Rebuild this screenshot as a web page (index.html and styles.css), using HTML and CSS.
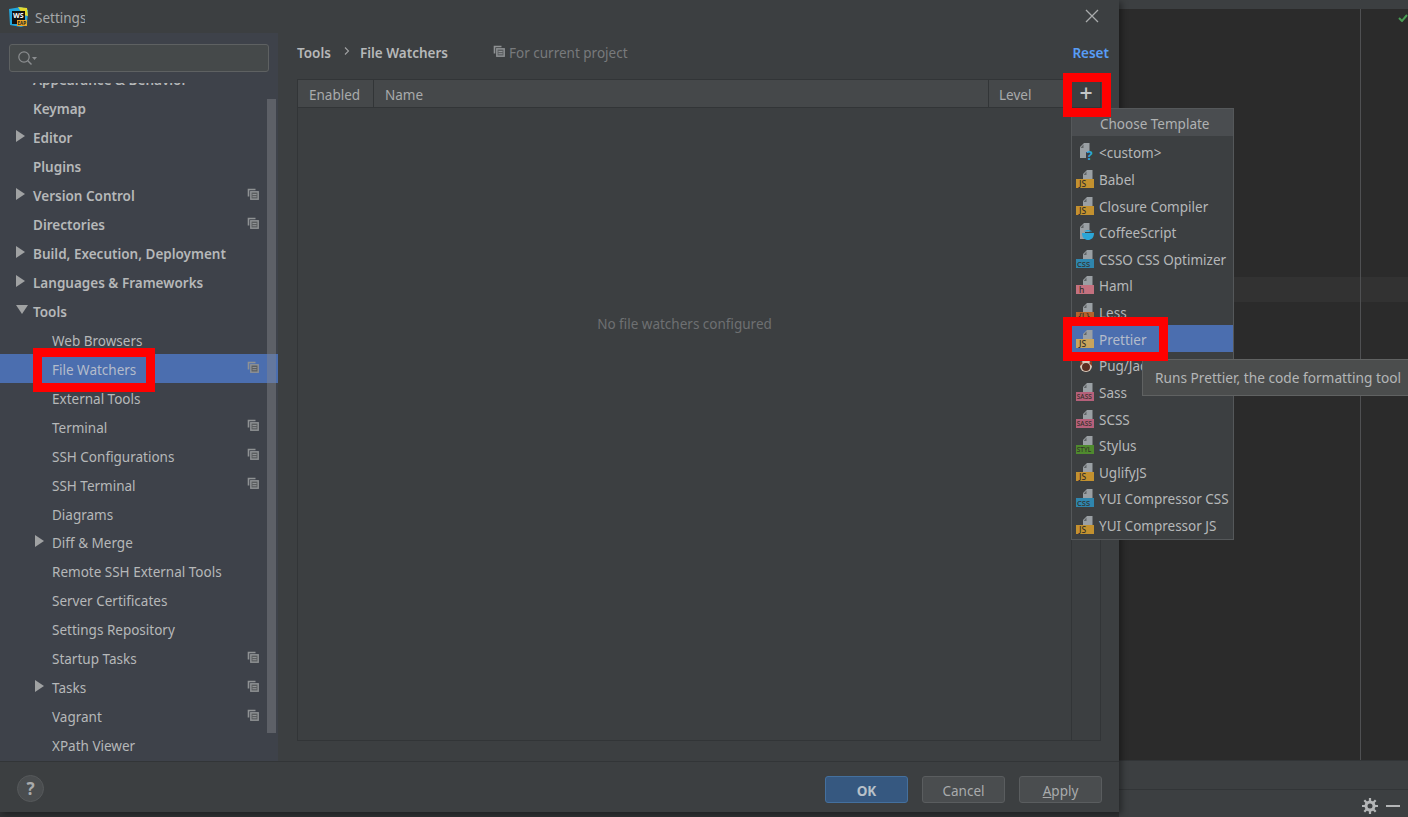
FILE: index.html
```html
<!DOCTYPE html>
<html lang="en">
<head>
  <meta charset="UTF-8">
  <title>Settings</title>
  <link rel="stylesheet" href="styles.css">
</head>
<body>
  <svg class="defs" width="0" height="0">
    <symbol id="scope" viewBox="0 0 12 12">
      <path d="M1.500 8.500v-7h7" fill="none" stroke="#8f9294" stroke-width="1.600"/>
      <rect x="3.800" y="3.800" width="7.400" height="7.400" fill="#5b5e60" stroke="#8f9294" stroke-width="1.400"/>
      <path d="M5.500 6.500h4M5.500 8.700h4" stroke="#8f9294"/>
    </symbol>
    <symbol id="page" viewBox="0 0 18 18">
      <path d="M11 0h5.500v9H7V4z" fill="#9aa0a4"/>
      <path d="M10.500 1.500v3.500h-3z" fill="#3c3f41" opacity="0.600"/>
    </symbol>
  </svg>

  <div class="page">
    <div class="dialog">
      <div class="titlebar">
        <svg class="logo" width="20" height="20" viewBox="0 0 20 20">
          <path d="M1 2l12-2 7 3-1 15-6 2-11-2z" fill="#22a6dc"/>
          <path d="M10 0l9 1 1 8-5-1z" fill="#e3d92f"/>
          <rect x="4" y="4" width="13" height="13" fill="#111"/>
          <text x="5" y="11" class="logo-ws">WS</text>
          <rect x="9" y="13" width="10" height="6" fill="#e8a72a"/>
          <text x="9.600" y="18" class="logo-eap">EAP</text>
        </svg>
        <span class="title">Settings</span>
        <svg class="close" width="14" height="14" viewBox="0 0 14 14"><path d="M1 1l12 12M13 1L1 13" stroke="#a9abac" stroke-width="1.300"/></svg>
      </div>

      <div class="main">
        <aside class="sidebar">
          <div class="search-wrap">
            <div class="search">
              <svg width="22" height="16" viewBox="0 0 22 16">
                <circle cx="7" cy="7" r="5.200" fill="none" stroke="#8b8e90" stroke-width="1.200"/>
                <path d="M10.800 10.800l3.700 3.700" stroke="#8b8e90" stroke-width="1.400"/>
                <path d="M15 7h5l-2.500 3z" fill="#8b8e90"/>
              </svg>
            </div>
          </div>
          <div class="tree">
            <ul class="tree-list">
              <li class="row top">Appearance &amp; Behavior</li>
              <li class="row top">Keymap</li>
              <li class="row top arrow">Editor</li>
              <li class="row top">Plugins</li>
              <li class="row top arrow">Version Control<svg class="scope"><use href="#scope"/></svg></li>
              <li class="row top">Directories<svg class="scope"><use href="#scope"/></svg></li>
              <li class="row top arrow">Build, Execution, Deployment</li>
              <li class="row top arrow">Languages &amp; Frameworks</li>
              <li class="row top arrow open">Tools</li>
              <li class="row sub">Web Browsers</li>
              <li class="row sub selected">File Watchers<svg class="scope"><use href="#scope"/></svg></li>
              <li class="row sub">External Tools</li>
              <li class="row sub">Terminal<svg class="scope"><use href="#scope"/></svg></li>
              <li class="row sub">SSH Configurations<svg class="scope"><use href="#scope"/></svg></li>
              <li class="row sub">SSH Terminal<svg class="scope"><use href="#scope"/></svg></li>
              <li class="row sub">Diagrams</li>
              <li class="row sub arrow">Diff &amp; Merge</li>
              <li class="row sub">Remote SSH External Tools</li>
              <li class="row sub">Server Certificates</li>
              <li class="row sub">Settings Repository</li>
              <li class="row sub">Startup Tasks<svg class="scope"><use href="#scope"/></svg></li>
              <li class="row sub arrow">Tasks<svg class="scope"><use href="#scope"/></svg></li>
              <li class="row sub">Vagrant<svg class="scope"><use href="#scope"/></svg></li>
              <li class="row sub">XPath Viewer</li>
            </ul>
          </div>
          <div class="scrollbar"></div>
        </aside>

        <section class="content">
          <div class="crumbs">
            <b>Tools</b>
            <svg class="chevron" width="6" height="8" viewBox="0 0 6 8"><path d="M1 .5L4.500 4 1 7.500" fill="none" stroke="#a0a2a3" stroke-width="1.100"/></svg>
            <b>File Watchers</b>
            <svg class="scope crumb-scope"><use href="#scope"/></svg>
            <span class="project">For current project</span>
            <a class="reset">Reset</a>
          </div>
          <div class="table">
            <div class="thead">
              <div class="th">Enabled</div>
              <div class="th">Name</div>
              <div class="th">Level</div>
              <div class="th-add">+</div>
            </div>
            <div class="tbody">
              <div class="empty">No file watchers configured</div>
              <div class="toolbar-col"></div>
            </div>
          </div>
        </section>
      </div>

      <div class="footer">
        <div class="help">?</div>
        <div class="buttons">
          <button class="btn primary">OK</button>
          <button class="btn">Cancel</button>
          <button class="btn"><u>A</u>pply</button>
        </div>
      </div>
    </div>

    <div class="backdrop">
      <div class="top-strip"></div>
      <div class="editor">
        <div class="caret-row"></div>
        <div class="guide"></div>
        <svg class="check" width="10" height="8" viewBox="0 0 10 8"><path d="M1 4l3 3 5-6" fill="none" stroke="#499c54" stroke-width="2"/></svg>
      </div>
      <div class="status-strip"></div>
      <div class="tool-strip">
        <svg width="16" height="16" viewBox="0 0 16 16">
          <circle cx="8" cy="8" r="4" fill="none" stroke="#b4b6b7" stroke-width="3"/>
          <path d="M8 0v3M8 13v3M0 8h3M13 8h3M2.300 2.300l2.200 2.200M11.500 11.500l2.200 2.200M13.700 2.300l-2.200 2.200M4.500 11.500l-2.200 2.200" stroke="#b4b6b7" stroke-width="2.200"/>
        </svg>
        <div class="minus"></div>
      </div>
    </div>

    <div class="popup">
      <div class="popup-head">Choose Template</div>
      <ul class="popup-list">
        <li class="tpl"><svg class="tpl-icon" viewBox="0 0 18 18"><use href="#page" width="18" height="18" x="-3" y="0"/><path d="M4 9h6v6H4z" fill="#9aa0a4"/><text x="10.500" y="17" class="q">?</text></svg>&lt;custom&gt;</li>
        <li class="tpl"><svg class="tpl-icon" viewBox="0 0 18 18"><use href="#page" width="18" height="18"/><rect y="9" width="18" height="9" fill="#c3912f"/><text x="3" y="16.500" class="badge">JS</text></svg>Babel</li>
        <li class="tpl"><svg class="tpl-icon" viewBox="0 0 18 18"><use href="#page" width="18" height="18"/><rect y="9" width="18" height="9" fill="#c3912f"/><text x="3" y="16.500" class="badge">JS</text></svg>Closure Compiler</li>
        <li class="tpl"><svg class="tpl-icon" viewBox="0 0 18 18"><use href="#page" width="18" height="18" x="-3" y="0"/><path d="M4 9h5v7H4z" fill="#9aa0a4"/><path d="M6 10h12c0 5-3 7-6 7S6 15 6 10z" fill="#2ba6d8"/><path d="M8 8.500c2-2 6-2 8 0z" fill="#2ba6d8"/></svg>CoffeeScript</li>
        <li class="tpl"><svg class="tpl-icon" viewBox="0 0 18 18"><use href="#page" width="18" height="18"/><rect y="9" width="18" height="9" fill="#2f86ae"/><text x="1" y="16.500" class="badge mid">CSS</text></svg>CSSO CSS Optimizer</li>
        <li class="tpl"><svg class="tpl-icon" viewBox="0 0 18 18"><use href="#page" width="18" height="18"/><rect y="9" width="18" height="9" fill="#c4717f"/><text x="3" y="16.500" class="badge">h</text></svg>Haml</li>
        <li class="tpl"><svg class="tpl-icon" viewBox="0 0 18 18"><use href="#page" width="18" height="18"/><rect y="9" width="18" height="9" fill="#b5622b"/><text x="2.500" y="16.500" class="badge">{L}</text></svg>Less</li>
        <li class="tpl active"><svg class="tpl-icon" viewBox="0 0 18 18"><use href="#page" width="18" height="18"/><rect y="9" width="18" height="9" fill="#c9a45c"/><text x="3" y="16.500" class="badge">JS</text></svg>Prettier</li>
        <li class="tpl"><svg class="tpl-icon" viewBox="0 0 18 18"><circle cx="10" cy="10" r="6" fill="#d8c8b8"/><circle cx="10" cy="11" r="4" fill="#5a2f22"/><path d="M4 5l3 2-3 3zM16 5l-3 2 3 3z" fill="#8a3b24"/></svg>Pug/Jade</li>
        <li class="tpl"><svg class="tpl-icon" viewBox="0 0 18 18"><use href="#page" width="18" height="18"/><rect y="9" width="18" height="9" fill="#b5607a"/><text x="0.800" y="16.300" class="badge tiny">SASS</text></svg>Sass</li>
        <li class="tpl"><svg class="tpl-icon" viewBox="0 0 18 18"><use href="#page" width="18" height="18"/><rect y="9" width="18" height="9" fill="#b5607a"/><text x="0.800" y="16.300" class="badge tiny">SASS</text></svg>SCSS</li>
        <li class="tpl"><svg class="tpl-icon" viewBox="0 0 18 18"><use href="#page" width="18" height="18"/><rect y="9" width="18" height="9" fill="#4f8a2e"/><text x="0.800" y="16.300" class="badge tiny">STYL</text></svg>Stylus</li>
        <li class="tpl"><svg class="tpl-icon" viewBox="0 0 18 18"><use href="#page" width="18" height="18"/><rect y="9" width="18" height="9" fill="#c3912f"/><text x="3" y="16.500" class="badge">JS</text></svg>UglifyJS</li>
        <li class="tpl"><svg class="tpl-icon" viewBox="0 0 18 18"><use href="#page" width="18" height="18"/><rect y="9" width="18" height="9" fill="#2f86ae"/><text x="1" y="16.500" class="badge mid">CSS</text></svg>YUI Compressor CSS</li>
        <li class="tpl"><svg class="tpl-icon" viewBox="0 0 18 18"><use href="#page" width="18" height="18"/><rect y="9" width="18" height="9" fill="#c3912f"/><text x="3" y="16.500" class="badge">JS</text></svg>YUI Compressor JS</li>
      </ul>
    </div>

    <div class="tooltip">Runs Prettier, the code formatting tool</div>

    <!-- red boxes drawn on the screenshot -->
    <div class="mark mark-watchers"></div>
    <div class="mark mark-add"></div>
    <div class="mark mark-prettier"></div>
  </div>
</body>
</html>
```

FILE: styles.css
```css
/* Base */
* {
  box-sizing: border-box;
}

html,
body {
  margin: 0;
  padding: 0;
  height: 100%;
  overflow: hidden;
}

body {
  font-family: "Noto Sans", "Open Sans", sans-serif;
  font-size: 13.500px;
  color: #b6b8b9;
  background: #2f3133;
}

ul {
  list-style: none;
  margin: 0;
  padding: 0;
}

.defs {
  position: absolute;
}

.page {
  position: relative;
  display: flex;
  width: 1408px;
  height: 817px;
  overflow: hidden;
}

/* Dialog */
.dialog {
  position: relative;
  z-index: 1;
  display: flex;
  flex-direction: column;
  flex: 0 0 1119px;
  height: 812px;
  background: #3c3f41;
  box-shadow: 3px 2px 6px rgba(0, 0, 0, 0.35);
}

.titlebar {
  display: flex;
  align-items: center;
  flex: 0 0 33px;
  padding: 0 20px 0 8px;
}

.logo-ws {
  font-size: 7px;
  font-weight: 700;
  fill: #ffffff;
}

.logo-eap {
  font-size: 4.500px;
  font-weight: 700;
  fill: #222222;
}

.title {
  margin-left: 7px;
  margin-top: 2px;
  width: 50px;
  overflow: hidden;
  color: #a6a8a9;
}

.close {
  margin-left: auto;
  margin-top: -2px;
}

.main {
  display: flex;
  flex: 1;
  min-height: 0;
}

/* Sidebar */
.sidebar {
  position: relative;
  display: flex;
  flex-direction: column;
  flex: 0 0 278px;
  background: #3e424a;
}

.search-wrap {
  flex: 0 0 50px;
  padding: 11px 9px 0;
}

.search {
  display: flex;
  align-items: center;
  height: 28px;
  padding-left: 7px;
  background: #45494a;
  border: 1px solid #5e6162;
  border-radius: 3px;
}

.tree {
  flex: 1;
  overflow: hidden;
}

.tree-list {
  margin-top: -18px;
}

.row {
  position: relative;
  display: flex;
  align-items: center;
  height: 28.950px;
  padding-top: 2px;
  padding-right: 19px;
  white-space: nowrap;
}

.row.top {
  padding-left: 33px;
  font-weight: 600;
}

.row.sub {
  padding-left: 52px;
}

.row.selected {
  background: #4b6eaf;
  color: #b4bccb;
}

.row.arrow::before {
  content: "";
  position: absolute;
  top: 7px;
  left: 16px;
  border-style: solid;
  border-width: 6px 0 6px 9px;
  border-color: transparent transparent transparent #a0a2a3;
}

.row.sub.arrow::before {
  left: 35px;
}

.row.open::before {
  top: 8px;
  border-width: 9px 6px 0 6px;
  border-color: #a0a2a3 transparent transparent transparent;
}

.scope {
  flex: none;
  width: 12px;
  height: 12px;
  margin-left: auto;
  margin-top: -5px;
}

.scrollbar {
  position: absolute;
  top: 66px;
  right: 2px;
  width: 9px;
  height: 634px;
  background: rgba(130, 134, 140, 0.45);
}

/* Content */
.content {
  display: flex;
  flex-direction: column;
  flex: 1;
  min-width: 0;
  padding: 0 18px 20px 19px;
}

.crumbs {
  display: flex;
  align-items: center;
  flex: 0 0 46px;
  padding-bottom: 7px;
}

.crumbs b {
  font-weight: 600;
}

.chevron {
  margin: -3px 10px 0 13px;
}

.crumb-scope {
  margin: -4px 4px 0 45px;
}

.project {
  color: #787a7c;
}

.reset {
  margin-left: auto;
  margin-right: -8px;
  font-weight: 600;
  color: #589df6;
}

.table {
  display: flex;
  flex-direction: column;
  flex: 1;
  border: 1px solid #323537;
}

.thead {
  display: grid;
  grid-template-columns: 76px 615px 83px 1fr;
  flex: 0 0 28px;
  background: #45484a;
  border-bottom: 1px solid #323537;
}

.th {
  display: flex;
  align-items: center;
  padding: 2px 0 0 11px;
  color: #a9abac;
  border-right: 1px solid #323537;
}

.th:nth-child(3) {
  padding-left: 10px;
  border-right: 0;
}

.th-add {
  display: flex;
  align-items: center;
  justify-content: center;
  font-size: 23px;
  font-weight: 500;
  line-height: 1;
  color: #c4c6c7;
  background: #3c3f41;
}

.tbody {
  display: flex;
  flex: 1;
}

.empty {
  display: flex;
  align-items: center;
  justify-content: center;
  flex: 1;
  padding-bottom: 200px;
  color: #6e7072;
}

.toolbar-col {
  flex: 0 0 29px;
  border-left: 1px solid #323537;
}

/* Footer */
.footer {
  display: flex;
  align-items: flex-start;
  justify-content: space-between;
  flex: 0 0 51px;
  padding: 14px 17px 0 17px;
  border-top: 1px solid #323537;
}

.help {
  display: flex;
  align-items: center;
  justify-content: center;
  width: 27px;
  height: 27px;
  margin-top: -1px;
  font-size: 17px;
  font-weight: 700;
  color: #a9abac;
  background: #4a4d4f;
  border: 1px solid #56595b;
  border-radius: 50%;
}

.buttons {
  display: flex;
  gap: 14px;
}

.btn {
  width: 83px;
  height: 27px;
  padding: 2px 0 0;
  font-family: inherit;
  font-size: 13.500px;
  color: #a9abac;
  background: #4a4d4f;
  border: 1px solid #5a5d5f;
  border-radius: 3px;
}

.btn.primary {
  font-weight: 700;
  color: #b8c0c9;
  background: #365880;
  border-color: #44709e;
}

/* What is behind the dialog */
.backdrop {
  display: flex;
  flex-direction: column;
  flex: 1;
}

.top-strip {
  flex: 0 0 9px;
  background: #3c3f41;
}

.editor {
  position: relative;
  flex: 0 0 752px;
  padding-top: 268px;
  background: #2b2b2b;
  border-bottom: 1px solid #323537;
}

.caret-row {
  height: 25px;
  background: #323232;
}

.guide {
  position: absolute;
  top: 0;
  bottom: 0;
  left: 241px;
  width: 1px;
  background: #4f5052;
}

.check {
  position: absolute;
  top: 5px;
  right: 0;
}

.status-strip {
  flex: 0 0 29px;
  background: #3c3f41;
  border-bottom: 1px solid #323537;
}

.tool-strip {
  display: flex;
  align-items: center;
  flex: 1;
  padding: 5px 0 0 243px;
  background: #3c3f41;
}

.minus {
  width: 14px;
  height: 2px;
  margin-left: 8px;
  background: #b4b6b7;
}

/* Template popup */
.popup {
  position: absolute;
  z-index: 2;
  top: 108px;
  left: 1071px;
  width: 163px;
  height: 432px;
  background: #3c3f41;
  border: 1px solid #55585a;
}

.popup-head {
  height: 27px;
  padding-left: 28px;
  line-height: 31px;
  color: #b0b2b3;
  background: #4a4d50;
}

.popup-list {
  padding-top: 3px;
}

.tpl {
  display: flex;
  align-items: center;
  height: 26.640px;
  padding-top: 2px;
  padding-left: 4px;
  white-space: nowrap;
}

.tpl.active {
  background: #4b6eaf;
  color: #b4bccb;
}

.tpl-icon {
  flex: none;
  width: 18px;
  height: 18px;
  margin-top: -2px;
  margin-right: 5px;
}

.badge {
  font-size: 8.500px;
  font-weight: 500;
  fill: #33302a;
}

.badge.mid {
  font-size: 7.500px;
}

.badge.tiny {
  font-size: 6.500px;
}

.q {
  font-size: 13px;
  font-weight: 700;
  fill: #2ba6d8;
}

.tooltip {
  position: absolute;
  z-index: 3;
  top: 359px;
  left: 1142px;
  width: 280px;
  height: 37px;
  padding-left: 12px;
  font-size: 13.700px;
  line-height: 35px;
  white-space: nowrap;
  color: #b4b6b7;
  background: #4b4d4d;
  border: 1px solid #606262;
}

/* Red annotation boxes */
.mark {
  position: absolute;
  z-index: 4;
  border: 9px solid #ff0000;
}

.mark-watchers {
  top: 348px;
  left: 33px;
  width: 122px;
  height: 44px;
}

.mark-add {
  top: 73px;
  left: 1063px;
  width: 48px;
  height: 44px;
}

.mark-prettier {
  top: 317px;
  left: 1063px;
  width: 105px;
  height: 44px;
}
```
